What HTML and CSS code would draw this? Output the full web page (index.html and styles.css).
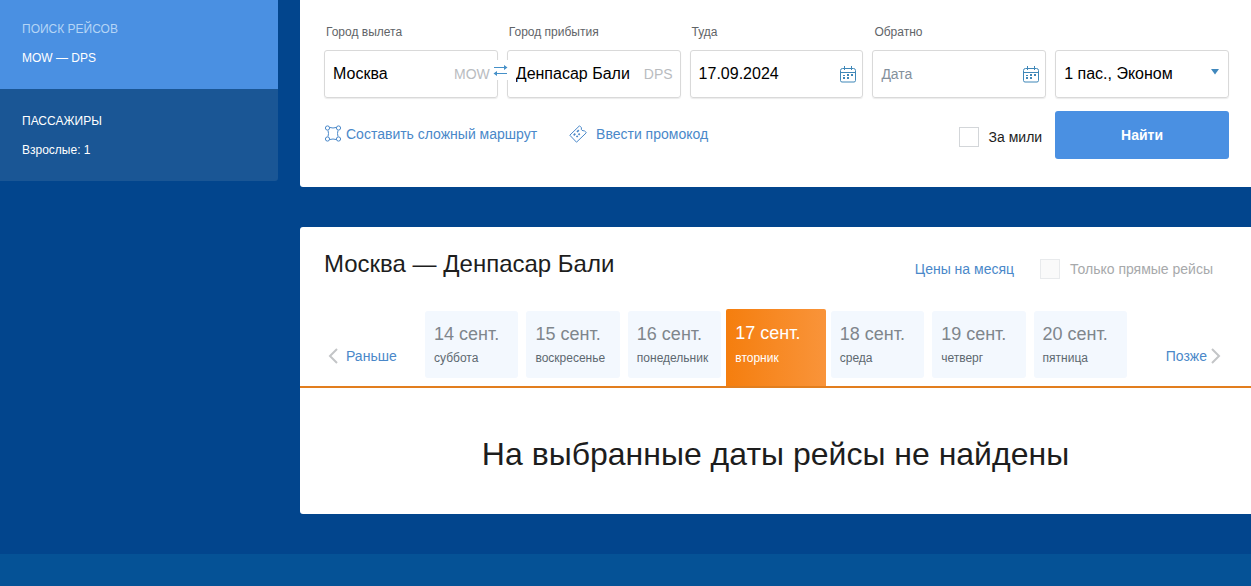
FILE: index.html
```html
<!DOCTYPE html>
<html lang="ru">
<head>
<meta charset="utf-8">
<meta name="viewport" content="width=device-width, initial-scale=1">
<title>Москва — Денпасар Бали</title>
<link rel="stylesheet" href="styles.css">
</head>
<body>
<svg class="sprite" aria-hidden="true">
  <symbol id="calendar" viewBox="0 0 16 17">
    <path d="M2.5 2.5h11a2 2 0 0 1 2 2v10a1.500 1.500 0 0 1-1.500 1.500h-12A1.500 1.500 0 0 1 .5 14.500v-10a2 2 0 0 1 2-2zM.5 6.500h15M4.500 0v4M11.500 0v4" fill="none" stroke="currentColor"/>
    <path d="M7 8h2v2H7zM11 8h2v2h-2zM3 9h2v1H3zM3 11h2v2H3zM7 11h2v2H7z" fill="currentColor"/>
  </symbol>
</svg>
<div class="layout">
  <aside class="sidebar">
    <section class="step step-active">
      <h2 class="step-title">ПОИСК РЕЙСОВ</h2>
      <p class="step-text">MOW — DPS</p>
    </section>
    <section class="step">
      <h2 class="step-title">ПАССАЖИРЫ</h2>
      <p class="step-text">Взрослые: 1</p>
    </section>
  </aside>
  <main class="content">
    <form class="panel search">
      <div class="field">
        <label class="field-label" for="from">Город вылета</label>
        <div class="field-box">
          <input class="field-input" id="from" type="text" value="Москва">
          <span class="code">MOW</span>
        </div>
      </div>
      <div class="field">
        <label class="field-label" for="to">Город прибытия</label>
        <div class="field-box">
          <button class="swap" type="button" aria-label="Поменять города местами">
            <svg width="15" height="11" viewBox="0 0 15 11" fill="none" stroke="currentColor"><path d="M1 2.500h11M3 8.500h11"/><path d="M11 0l3.500 2.500L11 5zM4 6L.5 8.500 4 11z" fill="currentColor" stroke="none"/></svg>
          </button>
          <input class="field-input" id="to" type="text" value="Денпасар Бали">
          <span class="code">DPS</span>
        </div>
      </div>
      <div class="field">
        <label class="field-label" for="out">Туда</label>
        <div class="field-box">
          <input class="field-input" id="out" type="text" value="17.09.2024">
          <svg class="field-icon" width="16" height="17"><use href="#calendar"/></svg>
        </div>
      </div>
      <div class="field">
        <label class="field-label" for="back">Обратно</label>
        <div class="field-box">
          <input class="field-input" id="back" type="text" placeholder="Дата">
          <svg class="field-icon" width="16" height="17"><use href="#calendar"/></svg>
        </div>
      </div>
      <div class="field field-last">
        <div class="field-box">
          <select class="field-input" aria-label="Пассажиры и класс"><option>1 пас., Эконом</option></select>
          <svg class="select-arrow" width="10" height="6" viewBox="0 0 10 6" aria-hidden="true"><path d="M1 0h8L5 5.500z" fill="currentColor"/></svg>
        </div>
      </div>
      <div class="links">
        <a class="link" href="#">
          <svg width="18" height="18" viewBox="0 0 18 18" fill="none" stroke="currentColor"><circle cx="3.500" cy="3" r="2.100"/><circle cx="14.500" cy="3" r="2.100"/><circle cx="3.500" cy="14" r="2.100"/><circle cx="14.500" cy="14" r="2.100"/><path d="M6 2.500q3 1 6 0M6 14.500q3-1 6 0M4 5.500q1 3 0 6M14 5.500q-1 3 0 6"/></svg>
          Составить сложный маршрут
        </a>
        <a class="link link-promo" href="#">
          <svg width="18" height="18" viewBox="0 0 18 18" fill="none" stroke="currentColor"><path d="M10.500.8l2 2q-.7 1.700.5 2.500t2.300.3l2 2.200L7.500 17.200.8 10.200z"/><path d="M4.700 10.300l1.600-1.600M8 7l1.800-1.800M7.500 12l1.200-1.200M9.500 9.800l1.200-1.200" stroke-width="1.700"/></svg>
          Ввести промокод
        </a>
      </div>
      <label class="check miles"><input class="check-input" type="checkbox">За мили</label>
      <button class="submit" type="submit">Найти</button>
    </form>

    <section class="panel results">
      <header class="results-head">
        <h1 class="route">Москва — Денпасар Бали</h1>
        <div class="options">
          <a class="link" href="#">Цены на месяц</a>
          <label class="check check-disabled"><input class="check-input" type="checkbox" disabled>Только прямые рейсы</label>
        </div>
      </header>
      <nav class="dates" aria-label="Даты">
        <a class="link pager" href="#">
          <svg class="chevron" width="10" height="16" viewBox="0 0 10 16"><path d="M9 1L2 8l7 7"/></svg>
          Раньше
        </a>
        <div class="days">
          <button class="day" type="button"><span class="day-date">14 сент.</span><span class="day-name">суббота</span></button>
          <button class="day" type="button"><span class="day-date">15 сент.</span><span class="day-name">воскресенье</span></button>
          <button class="day" type="button"><span class="day-date">16 сент.</span><span class="day-name">понедельник</span></button>
          <button class="day day-active" type="button" aria-current="date"><span class="day-date">17 сент.</span><span class="day-name">вторник</span></button>
          <button class="day" type="button"><span class="day-date">18 сент.</span><span class="day-name">среда</span></button>
          <button class="day" type="button"><span class="day-date">19 сент.</span><span class="day-name">четверг</span></button>
          <button class="day" type="button"><span class="day-date">20 сент.</span><span class="day-name">пятница</span></button>
        </div>
        <a class="link pager pager-next" href="#">
          Позже
          <svg class="chevron" width="10" height="16" viewBox="0 0 10 16"><path d="M1 1l7 7-7 7"/></svg>
        </a>
      </nav>
      <p class="empty">На выбранные даты рейсы не найдены</p>
    </section>
  </main>
</div>
<footer class="footer"></footer>
</body>
</html>
```
FILE: styles.css
```css
* {
  box-sizing: border-box;
}

body {
  margin: 0;
  min-height: 100vh;
  display: flex;
  flex-direction: column;
  background: #02458d;
  color: #1d1d1d;
  font-family: "Liberation Sans", Arial, sans-serif;
  font-size: 14px;
  line-height: 16px;
}

h1, h2, p {
  margin: 0;
  font-weight: 400;
}

button, input, select {
  font: inherit;
  margin: 0;
}

.sprite {
  position: absolute;
  width: 0;
  height: 0;
}

.layout {
  display: grid;
  grid-template-columns: 278px minmax(0, 1fr);
  gap: 22px;
  align-items: start;
  padding-bottom: 40px;
}

.footer {
  flex: 1;
  min-height: 32px;
  background: #055296;
}

/* Sidebar */
.sidebar {
  border-radius: 0 0 3px 0;
  overflow: hidden;
  color: #fff;
  font-size: 12px;
}

.step {
  display: grid;
  gap: 13px;
  padding: 24px 22px 23px;
  background: #1a5695;
}

.step-active {
  padding-top: 21px;
  background: #4a90e2;
}

.step-title {
  font-size: 12px;
}

.step-active .step-title {
  color: #b5d5f6;
}

/* Panels */
.content {
  display: grid;
  gap: 40px;
}

.panel {
  background: #fff;
}

/* Search form */
.search {
  display: grid;
  grid-template-columns: repeat(5, minmax(0, 1fr));
  gap: 13px 9px;
  padding: 24px 22px 28px 24px;
  border-radius: 0 0 0 3px;
}

.field {
  display: flex;
  flex-direction: column;
  gap: 10px;
}

.field-last {
  justify-content: flex-end;
}

.field-label {
  padding-left: 2px;
  color: #5f6468;
  font-size: 12px;
}

.field-box {
  position: relative;
  display: flex;
  align-items: center;
  height: 48px;
  padding: 0 6px 0 8px;
  border: 1px solid #d9d9d9;
  border-radius: 3px;
  box-shadow: 0 1px 1px #ececec;
}

.field-input {
  flex: 1;
  min-width: 0;
  width: 100%;
  height: 46px;
  padding: 0;
  border: 0;
  outline: 0;
  background: none;
  color: #000;
  font-size: 16px;
  appearance: none;
}

.field-input::placeholder {
  color: #84909c;
  font-size: 14px;
  opacity: 1;
}

.code {
  padding: 0 1px 0 7px;
  color: #b9bcbf;
}

.field-icon {
  color: #3f87b8;
}

.select-arrow {
  position: absolute;
  right: 8px;
  top: 18px;
  color: #4088bd;
  pointer-events: none;
}

.swap {
  position: absolute;
  left: -15px;
  top: 9px;
  width: 16px;
  height: 20px;
  display: flex;
  align-items: center;
  padding: 0;
  border: 0;
  background: #fff;
  color: #4590c8;
}

.links {
  grid-column: span 3;
  display: flex;
  align-items: center;
  gap: 32px;
  padding-bottom: 2px;
}

.link {
  display: flex;
  align-items: center;
  gap: 4px;
  color: #4a88c9;
  text-decoration: none;
  white-space: nowrap;
}

.link-promo {
  gap: 9px;
}

.check {
  display: flex;
  align-items: center;
  gap: 10px;
  white-space: nowrap;
}

.check-input {
  appearance: none;
  width: 20px;
  height: 20px;
  border: 1px solid #d3d6d9;
  background: #fff;
}

.check-disabled {
  color: #a7a9ab;
}

.check-disabled .check-input {
  border-color: #e8eaec;
  background: #fafafa;
}

.miles {
  justify-content: flex-end;
  padding: 4px 4px 0 0;
}

.submit {
  height: 48px;
  border: 0;
  border-radius: 3px;
  background: #4a90e2;
  color: #fff;
  font-weight: 700;
}

/* Results */
.results {
  border-radius: 3px 0 0 3px;
}

.results-head {
  display: flex;
  justify-content: space-between;
  align-items: flex-start;
  padding: 23px 38px 0 24px;
}

.route {
  font-size: 24px;
  line-height: 28px;
}

.options {
  display: flex;
  align-items: center;
  gap: 26px;
  padding-top: 9px;
}

.dates {
  display: grid;
  grid-template-columns: 101px minmax(0, 1fr) 102px;
  padding: 32px 22px 0 24px;
  border-bottom: 2px solid #e27e1e;
}

.days {
  display: grid;
  grid-template-columns: repeat(7, minmax(0, 1fr));
  gap: 8px;
  height: 75px;
}

.day {
  display: flex;
  flex-direction: column;
  gap: 6px;
  margin-bottom: 8px;
  padding: 13px 9px 0;
  border: 0;
  border-radius: 3px;
  background: #f3f8fe;
  color: #5d6870;
  font-size: 12px;
  text-align: left;
}

.day-date {
  color: #7f868c;
  font-size: 18px;
  line-height: 20px;
}

.day-active {
  gap: 7px;
  margin: -2px -3px 0;
  padding-top: 14px;
  border-radius: 2px 2px 0 0;
  background: linear-gradient(90deg, #f57e0e, #f9943a);
  color: #fff;
}

.day-active .day-date {
  color: #fff;
}

.pager {
  gap: 8px;
  padding: 15px 0 0 4px;
}

.pager-next {
  justify-content: flex-end;
  gap: 4px;
  padding: 15px 8px 0 0;
}

.chevron {
  fill: none;
  stroke: #c3c5c7;
  stroke-width: 2;
}

.empty {
  padding: 48px 24px 42px;
  font-size: 32px;
  line-height: 36px;
  text-align: center;
}
```
